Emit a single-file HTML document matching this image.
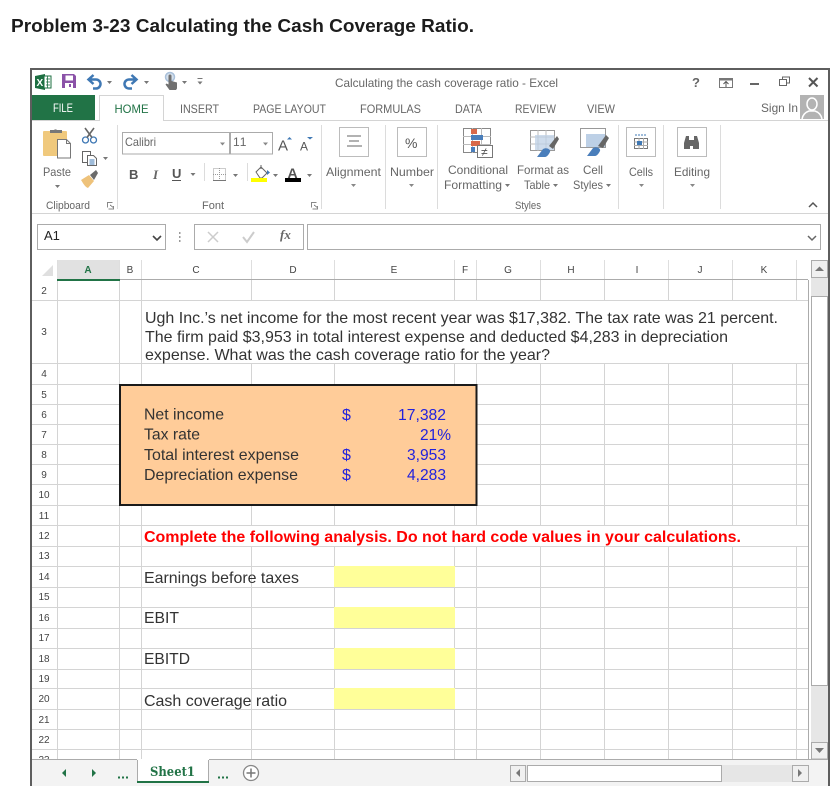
<!DOCTYPE html>
<html><head><meta charset="utf-8"><title>Problem 3-23</title>
<style>
html,body{margin:0;padding:0;background:#fff;width:838px;height:802px;overflow:hidden}
svg{display:block}
text{font-family:"Liberation Sans",sans-serif;white-space:pre}
.u{font-size:12px;fill:#666}
.c{font-size:10px;fill:#444;text-anchor:middle}
.r{font-size:10px;fill:#444;text-anchor:middle}
.b{font-size:16px;fill:#333}
.n{font-size:16px;fill:#2222dd}
</style></head><body>
<svg width="838" height="802" viewBox="0 0 838 802" xmlns="http://www.w3.org/2000/svg" shape-rendering="crispEdges">
<rect width="838" height="802" fill="#fff"/>
<text x="11" y="32" font-size="18" font-weight="700" fill="#1c1c1c" textLength="463" lengthAdjust="spacingAndGlyphs">Problem 3-23 Calculating the Cash Coverage Ratio.</text>

<!-- frame -->
<rect x="32" y="70" width="796" height="716" fill="#fff"/>
<rect x="30" y="68" width="800" height="2" fill="#5e5e5e"/>
<rect x="30" y="68" width="2" height="718" fill="#5e5e5e"/>
<rect x="828" y="68" width="2" height="718" fill="#5e5e5e"/>

<!-- QAT -->
<g shape-rendering="auto">
<path d="M35 76l10-2v16l-10-2z" fill="#1d6f42"/><rect x="44" y="76" width="7" height="12" fill="#fff" stroke="#1d6f42"/><path d="M46 79h4M46 82h4M46 85h4M47.500 76v12" stroke="#1d6f42" stroke-width=".8"/>
<text x="36.500" y="86" font-size="10" font-weight="700" fill="#fff">X</text>
<path d="M62 74h12l2 2v12H62z" fill="#8b52a8"/><rect x="65.500" y="75.500" width="7.500" height="5" fill="#fff"/><rect x="65" y="83" width="8" height="5" fill="#fff"/><rect x="69" y="84" width="2" height="3" fill="#8b52a8"/>
<path d="M90 79.500h6a4.500 4.500 0 0 1 0 9h-3M93.500 75l-5 4.500 5 4.500" fill="none" stroke="#3f78b4" stroke-width="2.500"/>
<path d="M135 79.500h-6a4.500 4.500 0 0 0 0 9h3M131.500 75l5 4.500-5 4.500" fill="none" stroke="#3f78b4" stroke-width="2.500"/>
<circle cx="170" cy="77" r="4.500" fill="#d5e0ec" stroke="#a9c0da" stroke-width="1.500"/>
<path d="M168.500 76a1.500 1.500 0 0 1 3 0v5l5.500 1.500v6l-1 1.500h-6.500l-4-5.500 1-1 2 1z" fill="#707070"/>
<path d="M107 81h5l-2.500 3zM144 81h5l-2.500 3zM182 81h5l-2.500 3zM197.500 81.500h5l-2.500 3z" fill="#777"/><rect x="197.500" y="78" width="5" height="1" fill="#777"/>
</g>
<text class="u" x="335" y="87" textLength="223" lengthAdjust="spacingAndGlyphs">Calculating the cash coverage ratio - Excel</text>

<!-- window buttons -->
<text x="692" y="87" font-size="13" font-weight="700" fill="#666">?</text>
<rect x="719.500" y="78.500" width="13" height="9" fill="none" stroke="#777"/><rect x="719.500" y="78.500" width="13" height="2" fill="#777"/>
<path d="M726 87v-5M723.500 84l2.500-2.500 2.500 2.500" fill="none" stroke="#555" shape-rendering="auto"/>
<rect x="750" y="83" width="9" height="2" fill="#666"/>
<rect x="779.500" y="79.500" width="7" height="6" fill="none" stroke="#666"/><path d="M782.500 79.500v-2.500h7v6h-3" fill="none" stroke="#666"/>
<path d="M809 78l8.500 8.500M817.500 78L809 86.500" stroke="#555" stroke-width="2" shape-rendering="auto"/>

<!-- tabs -->
<rect x="32" y="95" width="63" height="25" fill="#217346"/>
<text x="53" y="112" font-size="12" fill="#fff" textLength="20" lengthAdjust="spacingAndGlyphs">FILE</text>
<rect x="32" y="120" width="796" height="1" fill="#d4d4d4"/>
<path d="M99.500 121V95.500h64V121" fill="#fff" stroke="#d4d4d4"/><rect x="100" y="120" width="63" height="1.500" fill="#fff"/>
<text class="u" style="fill:#217346" x="114.500" y="113" textLength="34" lengthAdjust="spacingAndGlyphs">HOME</text>
<text class="u" x="180" y="113" textLength="39" lengthAdjust="spacingAndGlyphs">INSERT</text>
<text class="u" x="253" y="113" textLength="73" lengthAdjust="spacingAndGlyphs">PAGE LAYOUT</text>
<text class="u" x="360" y="113" textLength="61" lengthAdjust="spacingAndGlyphs">FORMULAS</text>
<text class="u" x="455" y="113" textLength="27" lengthAdjust="spacingAndGlyphs">DATA</text>
<text class="u" x="515" y="113" textLength="41" lengthAdjust="spacingAndGlyphs">REVIEW</text>
<text class="u" x="587" y="113" textLength="28" lengthAdjust="spacingAndGlyphs">VIEW</text>
<text class="u" x="761" y="112" textLength="37" lengthAdjust="spacingAndGlyphs">Sign In</text>
<rect x="800" y="95" width="24" height="24" fill="#b3b3b3"/>
<g shape-rendering="auto"><ellipse cx="812" cy="104" rx="5" ry="6" fill="#b3b3b3" stroke="#fff" stroke-width="1.500"/><path d="M802 119c1-5 4-7 7-8h6c3 1 6 3 7 8" fill="#b3b3b3" stroke="#fff" stroke-width="1.500"/></g>

<!-- ribbon separators -->
<g fill="#dcdcdc"><rect x="117" y="125" width="1" height="84"/><rect x="321" y="125" width="1" height="84"/><rect x="385" y="125" width="1" height="84"/><rect x="437" y="125" width="1" height="84"/><rect x="618" y="125" width="1" height="84"/><rect x="663" y="125" width="1" height="84"/><rect x="720" y="125" width="1" height="84"/><rect x="204" y="163" width="1" height="18"/><rect x="247" y="163" width="1" height="18"/></g>
<rect x="32" y="213" width="796" height="1" fill="#d4d4d4"/>

<!-- clipboard group -->
<g shape-rendering="auto">
<rect x="43" y="131" width="24" height="25" rx="1" fill="#f0c97d"/>
<path d="M50 133v-3h4a2 2 0 0 1 3 0h5v3z" fill="#777"/>
<path d="M57.500 139.500h9l4 4v14.500h-13z" fill="#fff" stroke="#777"/><path d="M66.500 139.500v4h4" fill="none" stroke="#777"/>
<circle cx="85.500" cy="140" r="3" fill="none" stroke="#3f78b4" stroke-width="1.300"/><circle cx="93.500" cy="140" r="3" fill="none" stroke="#3f78b4" stroke-width="1.300"/>
<path d="M87 137.500l7-9.500M92 137.500l-7-9.500" stroke="#666" stroke-width="1.600"/>
<rect x="82.500" y="151.500" width="8" height="11" fill="#fff" stroke="#666"/><path d="M87.500 155.500h6l3 3v7h-9z" fill="#fff" stroke="#666"/><path d="M89.500 160h5M89.500 162h5M89.500 164h5" stroke="#3f78b4" stroke-width=".9"/>
<path d="M103 157h5l-2.500 3z" fill="#777"/>
<path d="M81 180l8-5 5 6-6 7c-3-1-5-5-7-8z" fill="#eec27a"/><path d="M90 175l6-5 2 3-4 7z" fill="#6b6b6b"/>
<path d="M55 185h5l-2.500 3z" fill="#777"/>
</g>
<text class="u" x="43" y="176" textLength="28" lengthAdjust="spacingAndGlyphs">Paste</text>
<text class="u" style="font-size:11px" x="46" y="209" textLength="44" lengthAdjust="spacingAndGlyphs">Clipboard</text>
<path d="M107.500 207.500v-5h5M110 205l4 3M108.500 209h5v-3" fill="none" stroke="#888"/>

<!-- font group -->
<rect x="122.500" y="132.500" width="107" height="21.500" fill="#fff" stroke="#ababab"/>
<rect x="230.500" y="132.500" width="42" height="21.500" fill="#fff" stroke="#ababab"/>
<text class="u" x="125" y="146" textLength="31" lengthAdjust="spacingAndGlyphs">Calibri</text>
<text class="u" style="letter-spacing:1px" x="233" y="146">11</text>
<g shape-rendering="auto" fill="#888"><path d="M220 142.500h5l-2.500 3zM263 142.500h5l-2.500 3z"/></g>
<text x="278" y="150.500" font-size="15" fill="#555">A</text><text x="300" y="150.500" font-size="12" fill="#555">A</text>
<g shape-rendering="auto"><path d="M287 139.500l2.500-2.500 2.500 2.500z" fill="#3f78b4"/><path d="M307 137h6l-3 2.500z" fill="#3f78b4"/></g>
<text x="129" y="179" font-size="13" font-weight="700" fill="#555">B</text>
<text x="153" y="179" font-size="13" font-weight="700" font-style="italic" fill="#666" style="font-family:'Liberation Serif',serif">I</text>
<text x="172" y="178" font-size="13" font-weight="700" fill="#555">U</text><rect x="172" y="180" width="9" height="1" fill="#555"/>
<path d="M190.500 173h5l-2.500 3z M233 174h5l-2.500 3z M273 174h5l-2.500 3z M307 174h5l-2.500 3z" fill="#777" shape-rendering="auto"/>
<rect x="213.500" y="168.500" width="12" height="12" fill="none" stroke="#999" stroke-dasharray="1 1"/><path d="M219.500 168v13M213 174.500h13" stroke="#999" stroke-dasharray="1 1"/><rect x="213" y="180" width="13" height="1" fill="#777"/>
<g shape-rendering="auto"><path d="M256 172l5-5 6 6-5 5h-2z" fill="#fff" stroke="#666"/><path d="M261 165v4" stroke="#666"/><path d="M267 170l3 2.500-3 2.500z" fill="#3f78b4"/></g>
<rect x="251" y="178" width="16" height="4" fill="#ffff00"/>
<text x="287.500" y="178" font-size="14" font-weight="700" fill="#555">A</text>
<rect x="285" y="178" width="16" height="4" fill="#000"/>
<text class="u" style="font-size:11px" x="202" y="209" textLength="22" lengthAdjust="spacingAndGlyphs">Font</text>
<path d="M311.500 207.500v-5h5M314 205l4 3M312.500 209h5v-3" fill="none" stroke="#888"/>

<!-- alignment / number -->
<rect x="339.500" y="127.500" width="29" height="29" fill="#fff" stroke="#bcbcbc"/>
<path d="M347 136h14M349 141h10M347 146h15" stroke="#666"/>
<rect x="397.500" y="127.500" width="29" height="29" fill="#fff" stroke="#bcbcbc"/>
<text x="405" y="148" font-size="14" fill="#555">%</text>
<text class="u" x="326" y="176" textLength="55" lengthAdjust="spacingAndGlyphs">Alignment</text>
<text class="u" x="390" y="176" textLength="44" lengthAdjust="spacingAndGlyphs">Number</text>
<path d="M351 184h5l-2.500 3zM409 184h5l-2.500 3z" fill="#888" shape-rendering="auto"/>

<!-- styles -->
<g>
<rect x="463.500" y="128.500" width="27" height="24" fill="#fff" stroke="#888"/>
<path d="M463 136.500h28M463 144.500h28M472.500 128v25M481.500 128v25" stroke="#bbb"/>
<rect x="471" y="129" width="6" height="5" fill="#d9694a"/><rect x="471" y="135" width="12" height="5" fill="#4a7ebb"/><rect x="471" y="141" width="9" height="5" fill="#d9694a"/><rect x="471" y="147" width="4" height="5" fill="#4a7ebb"/>
<rect x="477.500" y="145.500" width="15" height="12" fill="#fff" stroke="#777"/>
<text x="481" y="156" font-size="12" fill="#555">≠</text>
<rect x="530.500" y="130.500" width="24" height="20" fill="#fff" stroke="#999"/>
<path d="M530 137h25M530 144h25M538 130v21M546 130v21" stroke="#bbb"/>
<rect x="535" y="135" width="19" height="15" fill="#bdd0e6" opacity=".75"/>
<rect x="580.500" y="128.500" width="25" height="19" fill="#fff" stroke="#999"/><rect x="586" y="134" width="19" height="13" fill="#bdd0e6"/>
<g shape-rendering="auto">
<path d="M549 146l8-10 2 3-6 10z" fill="#666"/><path d="M537 157l6-8c3-2 8 0 7 3-1 2-3 5-5 5z" fill="#4a7ebb"/>
<path d="M598 146l8-11 3 3-6 10z" fill="#666"/><path d="M587 156l6-8c3-2 8 0 7 3-1 2-3 5-5 5z" fill="#4a7ebb"/>
</g>
</g>
<text class="u" x="448" y="174" textLength="60" lengthAdjust="spacingAndGlyphs">Conditional</text>
<text class="u" x="444" y="189" textLength="58" lengthAdjust="spacingAndGlyphs">Formatting</text>
<text class="u" x="517" y="174" textLength="52" lengthAdjust="spacingAndGlyphs">Format as</text>
<text class="u" x="524" y="189" textLength="26" lengthAdjust="spacingAndGlyphs">Table</text>
<text class="u" x="583" y="174" textLength="20" lengthAdjust="spacingAndGlyphs">Cell</text>
<text class="u" x="573" y="189" textLength="30" lengthAdjust="spacingAndGlyphs">Styles</text>
<path d="M505 184h5l-2.500 3zM553 184h5l-2.500 3zM606 184h5l-2.500 3z" fill="#777" shape-rendering="auto"/>
<text class="u" style="font-size:11px" x="515" y="209" textLength="26" lengthAdjust="spacingAndGlyphs">Styles</text>

<!-- cells / editing -->
<rect x="626.500" y="127.500" width="29" height="29" fill="#fff" stroke="#bcbcbc"/>
<path d="M635 135h12" stroke="#3f78b4" stroke-dasharray="2 1"/><rect x="634.500" y="138.500" width="13" height="10" fill="#fff" stroke="#777"/><path d="M634 142h14M634 145.500h14M639 138v11M643.500 138v11" stroke="#aaa"/><rect x="637" y="141" width="5" height="4" fill="#3f78b4"/>
<rect x="677.500" y="127.500" width="29" height="29" fill="#fff" stroke="#bcbcbc"/>
<path d="M684 149v-6l2-7h3v4h5v-4h3l2 7v6h-6v-3h-3v3z" fill="#666" shape-rendering="auto"/>
<text class="u" x="629" y="176" textLength="24" lengthAdjust="spacingAndGlyphs">Cells</text>
<text class="u" x="674" y="176" textLength="36" lengthAdjust="spacingAndGlyphs">Editing</text>
<path d="M639 184h5l-2.500 3zM690 184h5l-2.500 3z" fill="#888" shape-rendering="auto"/>
<path d="M809 207l4-4 4 4" fill="none" stroke="#555" stroke-width="1.500" shape-rendering="auto"/>

<!-- formula bar -->
<rect x="37.500" y="224.500" width="128" height="25" fill="#fff" stroke="#ababab"/>
<text x="44" y="240" font-size="13" fill="#222">A1</text>
<path d="M153 236l4 4 4-4" fill="none" stroke="#444" stroke-width="1.600" shape-rendering="auto"/>
<path d="M179 232h1.500v2H179zM179 236h1.500v2H179zM179 240h1.500v2H179z" fill="#999"/>
<rect x="194.500" y="224.500" width="109" height="25" fill="#fff" stroke="#ababab"/>
<path d="M208 232l10 10M218 232l-10 10" stroke="#ccc" stroke-width="1.500" shape-rendering="auto"/>
<path d="M243 237l4 5 7-10" fill="none" stroke="#ccc" stroke-width="2" shape-rendering="auto"/>
<text x="280" y="239" font-size="13" font-style="italic" font-weight="700" fill="#666" style="font-family:'Liberation Serif',serif">fx</text>
<rect x="307.500" y="224.500" width="513" height="25" fill="#fff" stroke="#ababab"/>
<path d="M808 236l4 4 4-4" fill="none" stroke="#666" stroke-width="1.500" shape-rendering="auto"/>

<!-- column header -->
<path d="M42 276h11v-11z" fill="#dfdfdf" shape-rendering="auto"/>
<rect x="57" y="260" width="62" height="19" fill="#e1e1e1"/>
<g fill="#dedede"><rect x="57" y="260" width="1" height="20"/><rect x="119" y="260" width="1" height="20"/><rect x="141" y="260" width="1" height="20"/><rect x="251" y="260" width="1" height="20"/><rect x="334" y="260" width="1" height="20"/><rect x="454" y="260" width="1" height="20"/><rect x="476" y="260" width="1" height="20"/><rect x="540" y="260" width="1" height="20"/><rect x="604" y="260" width="1" height="20"/><rect x="668" y="260" width="1" height="20"/><rect x="732" y="260" width="1" height="20"/><rect x="796" y="260" width="1" height="20"/></g>
<text class="c" style="fill:#217346;font-weight:700" x="88" y="273">A</text>
<text class="c" x="130" y="273">B</text><text class="c" x="196" y="273">C</text><text class="c" x="293" y="273">D</text><text class="c" x="394" y="273">E</text><text class="c" x="465" y="273">F</text><text class="c" x="508" y="273">G</text><text class="c" x="571" y="273">H</text><text class="c" x="637" y="273">I</text><text class="c" x="700" y="273">J</text><text class="c" x="764" y="273">K</text>

<!-- grid -->
<g fill="#d4d4d4">
<rect x="57" y="280" width="1" height="479"/><rect x="119" y="280" width="1" height="479"/><rect x="141" y="280" width="1" height="479"/><rect x="251" y="280" width="1" height="479"/><rect x="334" y="280" width="1" height="479"/><rect x="454" y="280" width="1" height="479"/><rect x="476" y="280" width="1" height="479"/><rect x="540" y="280" width="1" height="479"/><rect x="604" y="280" width="1" height="479"/><rect x="668" y="280" width="1" height="479"/><rect x="732" y="280" width="1" height="479"/><rect x="796" y="280" width="1" height="479"/>
<rect x="32" y="300" width="776" height="1"/><rect x="32" y="363" width="776" height="1"/><rect x="32" y="384" width="776" height="1"/><rect x="32" y="404" width="776" height="1"/><rect x="32" y="424" width="776" height="1"/><rect x="32" y="444" width="776" height="1"/><rect x="32" y="464" width="776" height="1"/><rect x="32" y="484" width="776" height="1"/><rect x="32" y="505" width="776" height="1"/><rect x="32" y="525" width="776" height="1"/><rect x="32" y="546" width="776" height="1"/><rect x="32" y="566" width="776" height="1"/><rect x="32" y="587" width="776" height="1"/><rect x="32" y="607" width="776" height="1"/><rect x="32" y="628" width="776" height="1"/><rect x="32" y="648" width="776" height="1"/><rect x="32" y="669" width="776" height="1"/><rect x="32" y="688" width="776" height="1"/><rect x="32" y="709" width="776" height="1"/><rect x="32" y="729" width="776" height="1"/><rect x="32" y="749" width="776" height="1"/>
</g>
<rect x="142" y="301" width="666" height="62" fill="#fff"/>
<rect x="142" y="526" width="666" height="20" fill="#fff"/>
<rect x="57" y="279" width="751" height="1" fill="#ababab"/>
<rect x="57" y="279" width="63" height="2" fill="#217346"/>
<rect x="808" y="280" width="1" height="479" fill="#ababab"/>

<!-- row numbers -->
<text class="r" x="44" y="294">2</text><text class="r" x="44" y="335">3</text><text class="r" x="44" y="377">4</text><text class="r" x="44" y="398">5</text><text class="r" x="44" y="418">6</text><text class="r" x="44" y="438">7</text><text class="r" x="44" y="458">8</text><text class="r" x="44" y="478">9</text><text class="r" x="44" y="498">10</text><text class="r" x="44" y="519">11</text><text class="r" x="44" y="539">12</text><text class="r" x="44" y="559">13</text><text class="r" x="44" y="580">14</text><text class="r" x="44" y="600">15</text><text class="r" x="44" y="621">16</text><text class="r" x="44" y="641">17</text><text class="r" x="44" y="662">18</text><text class="r" x="44" y="682">19</text><text class="r" x="44" y="702">20</text><text class="r" x="44" y="723">21</text><text class="r" x="44" y="743">22</text><text class="r" x="44" y="763">23</text>

<!-- cell content -->
<text class="b" x="145" y="323" textLength="633" lengthAdjust="spacingAndGlyphs">Ugh Inc.’s net income for the most recent year was $17,382. The tax rate was 21 percent.</text>
<text class="b" x="145" y="342" textLength="583" lengthAdjust="spacingAndGlyphs">The firm paid $3,953 in total interest expense and deducted $4,283 in depreciation</text>
<text class="b" x="145" y="360" textLength="405" lengthAdjust="spacingAndGlyphs">expense. What was the cash coverage ratio for the year?</text>

<rect x="120" y="385" width="356.500" height="120" fill="#ffcc99" stroke="#1a1a1a" stroke-width="2"/>
<text class="b" x="144" y="419.500" textLength="80" lengthAdjust="spacingAndGlyphs">Net income</text>
<text class="b" x="144" y="439.500" textLength="56" lengthAdjust="spacingAndGlyphs">Tax rate</text>
<text class="b" x="144" y="460" textLength="155" lengthAdjust="spacingAndGlyphs">Total interest expense</text>
<text class="b" x="144" y="480" textLength="154" lengthAdjust="spacingAndGlyphs">Depreciation expense</text>
<text class="n" x="342" y="420">$</text><text class="n" x="342" y="460">$</text><text class="n" x="342" y="480">$</text>
<text class="n" x="398" y="420" textLength="48" lengthAdjust="spacingAndGlyphs">17,382</text>
<text class="n" x="420" y="440" textLength="31" lengthAdjust="spacingAndGlyphs">21%</text>
<text class="n" x="407" y="460" textLength="39" lengthAdjust="spacingAndGlyphs">3,953</text>
<text class="n" x="407" y="480" textLength="39" lengthAdjust="spacingAndGlyphs">4,283</text>

<text x="144" y="542" font-size="16" font-weight="700" fill="#ff0000" textLength="597" lengthAdjust="spacingAndGlyphs">Complete the following analysis. Do not hard code values in your calculations.</text>

<rect x="334" y="566" width="121" height="21" fill="#ffff99"/>
<rect x="334" y="607" width="121" height="21" fill="#ffff99"/>
<rect x="334" y="648" width="121" height="21" fill="#ffff99"/>
<rect x="334" y="688" width="121" height="21" fill="#ffff99"/>
<text class="b" x="144" y="583" textLength="155" lengthAdjust="spacingAndGlyphs">Earnings before taxes</text>
<text class="b" x="144" y="623" textLength="35" lengthAdjust="spacingAndGlyphs">EBIT</text>
<text class="b" x="144" y="664" textLength="46" lengthAdjust="spacingAndGlyphs">EBITD</text>
<text class="b" x="144" y="706" textLength="143" lengthAdjust="spacingAndGlyphs">Cash coverage ratio</text>

<!-- vertical scrollbar -->
<rect x="809" y="260" width="19" height="499" fill="#fff"/>
<rect x="811" y="260" width="17" height="499" fill="#e6e6e6"/>
<rect x="811.500" y="260.500" width="16" height="17" fill="#f0f0f0" stroke="#ababab"/>
<path d="M815 271h9l-4.500-4.500z" fill="#777" shape-rendering="auto"/>
<rect x="811.500" y="296.500" width="16" height="389" fill="#fff" stroke="#ababab"/>
<rect x="811.500" y="742.500" width="16" height="16.500" fill="#f0f0f0" stroke="#ababab"/>
<path d="M815 748h9l-4.500 5z" fill="#777" shape-rendering="auto"/>

<!-- footer -->
<rect x="32" y="759" width="796" height="27" fill="#f3f3f3"/>
<rect x="32" y="759" width="796" height="1" fill="#ababab"/>
<rect x="137" y="759" width="72" height="24" fill="#fff"/>
<path d="M137.500 760v22M208.500 760v22" stroke="#ababab"/>
<rect x="137" y="781" width="72" height="2" fill="#217346"/>
<text x="150" y="776" font-size="13" font-weight="700" fill="#217346" style="font-family:'DejaVu Serif',serif" textLength="45" lengthAdjust="spacingAndGlyphs">Sheet1</text>
<path d="M66 769v8l-4-4zM92 769v8l4-4z" fill="#217346" shape-rendering="auto"/>
<path d="M118 776.500h2v2h-2zM122 776.500h2v2h-2zM126 776.500h2v2h-2zM218 776.500h2v2h-2zM222 776.500h2v2h-2zM226 776.500h2v2h-2z" fill="#217346"/>
<g shape-rendering="auto"><circle cx="251" cy="773" r="7.500" fill="#fff" stroke="#888" stroke-width="1.300"/><path d="M251 768.500v9M246.500 773h9" stroke="#777" stroke-width="1.500"/></g>
<rect x="510" y="765" width="298" height="17" fill="#e6e6e6"/>
<rect x="510.500" y="765.500" width="15" height="16" fill="#f0f0f0" stroke="#ababab"/>
<path d="M520 769v8l-4-4z" fill="#777" shape-rendering="auto"/>
<rect x="527.500" y="765.500" width="194" height="16" fill="#fff" stroke="#ababab"/>
<rect x="792.500" y="765.500" width="16" height="16" fill="#f0f0f0" stroke="#ababab"/>
<path d="M798 769v8l4-4z" fill="#777" shape-rendering="auto"/>
</svg>
</body></html>
